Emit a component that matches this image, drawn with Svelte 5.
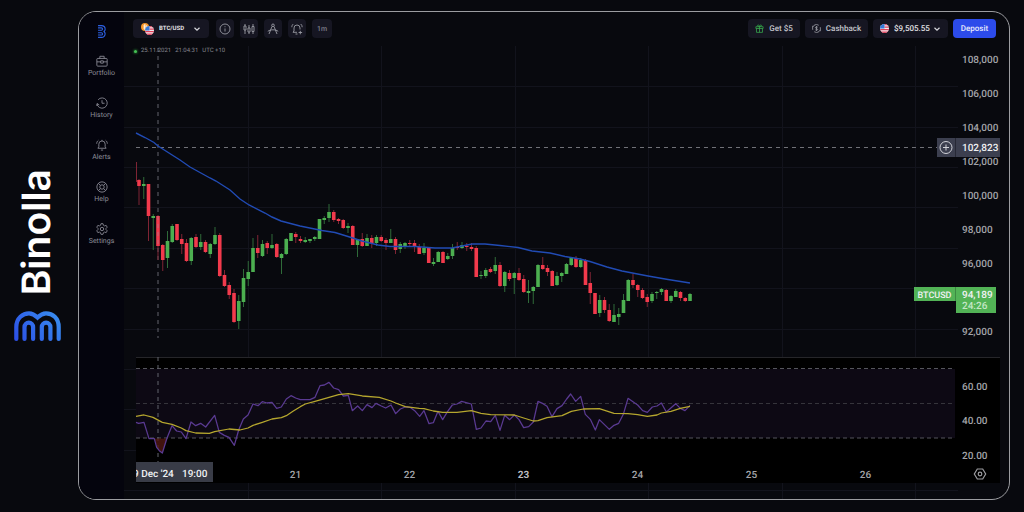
<script lang="ts">
	type Candle = [dir: string, high: number, top: number, bottom: number, low: number];

	const nav = ['Portfolio', 'History', 'Alerts', 'Help', 'Settings'];
	const tools = ['Information', 'Chart type', 'Drawing tools', 'Add alert'];

	const candles: Candle[] = [
		['r', 179, 180, 186, 205], ['g', 177, 184, 186, 199], ['r', 184, 184, 216, 241],
		['g', 214, 216, 218, 250], ['r', 215, 216, 246, 260], ['r', 244, 245, 260, 271],
		['g', 231, 241, 258, 268], ['g', 224, 226, 242, 243], ['r', 224, 224, 240, 241],
		['r', 234, 239, 244, 254], ['r', 239, 243, 261, 262], ['g', 237, 238, 261, 265],
		['r', 234, 237, 247, 248], ['g', 234, 242, 247, 250], ['r', 240, 242, 252, 253],
		['g', 243, 244, 254, 258], ['g', 227, 235, 244, 245], ['r', 233, 235, 276, 277],
		['r', 270, 275, 286, 287], ['r', 282, 285, 295, 299], ['r', 289, 293, 322, 323],
		['g', 295, 301, 321, 329], ['g', 269, 278, 302, 307], ['g', 261, 272, 279, 286],
		['g', 238, 248, 272, 272], ['r', 235, 248, 253, 258], ['g', 240, 244, 256, 257],
		['r', 241, 243, 248, 254], ['g', 234, 245, 248, 249], ['r', 243, 244, 257, 258],
		['g', 253, 254, 258, 274], ['g', 238, 239, 254, 255], ['g', 233, 233, 241, 241],
		['r', 232, 234, 237, 243], ['r', 236, 239, 241, 243], ['g', 237, 240, 242, 243],
		['g', 239, 239, 241, 243], ['g', 236, 237, 239, 241], ['g', 219, 219, 239, 239],
		['g', 216, 218, 220, 224], ['g', 204, 212, 218, 222], ['r', 210, 212, 220, 222],
		['r', 218, 219, 221, 224], ['r', 219, 220, 228, 229], ['g', 223, 226, 228, 233],
		['r', 225, 226, 245, 245], ['g', 239, 239, 245, 257], ['r', 233, 239, 246, 247],
		['g', 234, 238, 246, 246], ['r', 235, 238, 243, 248], ['g', 235, 237, 243, 246],
		['r', 235, 237, 241, 242], ['r', 238, 240, 243, 250], ['g', 229, 239, 243, 243],
		['r', 237, 239, 250, 254], ['g', 242, 244, 249, 253], ['g', 242, 243, 246, 249],
		['r', 240, 243, 244, 247], ['r', 240, 243, 247, 252], ['r', 244, 247, 254, 254],
		['g', 243, 248, 253, 255], ['r', 247, 248, 263, 263], ['g', 258, 262, 264, 266],
		['g', 251, 252, 262, 262], ['r', 251, 252, 263, 263], ['g', 253, 256, 259, 260],
		['g', 244, 248, 256, 259], ['r', 242, 247, 248, 250], ['g', 242, 245, 248, 249],
		['r', 243, 246, 247, 251], ['r', 243, 247, 249, 251], ['r', 246, 248, 277, 277],
		['g', 271, 275, 276, 279], ['g', 268, 270, 276, 278], ['r', 267, 269, 272, 273],
		['g', 257, 265, 271, 274], ['r', 262, 265, 286, 287], ['g', 271, 272, 286, 292],
		['r', 270, 273, 279, 281], ['g', 272, 273, 278, 294], ['r', 268, 273, 280, 281],
		['r', 275, 279, 292, 293], ['g', 280, 291, 293, 303], ['g', 286, 287, 291, 304],
		['g', 264, 265, 287, 287], ['r', 257, 265, 269, 270], ['r', 265, 268, 272, 276],
		['r', 270, 271, 286, 286], ['g', 272, 276, 285, 286], ['g', 272, 273, 276, 282],
		['g', 263, 264, 274, 274], ['g', 257, 258, 265, 266], ['r', 256, 258, 267, 268],
		['g', 258, 260, 267, 268], ['r', 259, 260, 285, 285], ['r', 272, 283, 293, 304],
		['r', 293, 293, 314, 314], ['g', 295, 300, 313, 317], ['r', 297, 300, 310, 313],
		['r', 304, 310, 321, 322], ['g', 304, 315, 322, 322], ['g', 308, 314, 317, 325],
		['g', 294, 300, 313, 313], ['g', 279, 280, 301, 301], ['r', 274, 280, 285, 288],
		['r', 284, 285, 290, 297], ['r', 288, 290, 298, 299], ['r', 294, 297, 302, 307],
		['g', 292, 294, 301, 303], ['g', 291, 292, 293, 299], ['g', 288, 289, 292, 295],
		['r', 289, 290, 301, 301], ['g', 295, 296, 301, 303], ['g', 289, 291, 297, 297],
		['r', 291, 292, 298, 301], ['r', 297, 298, 301, 302], ['g', 293, 294, 301, 301]
	];

	const average =
		'136,133 145,137.5 154,142.5 158,146 180,160 190,167 210,178 216,181 230,190 240,199 249,205 265,213 272,217 281,221 300,226 322,230.5 335,232.5 348,236.5 362,241 378,245 390,246.5 415,246.5 435,248 452,248 462,246 472,244 485,244 500,245.5 518,247.5 532,251 550,253 565,256.5 580,259 590,261.5 607,267 622,271 648,276 668,279.5 690,283';

	// oscillator lines use their own grid, three units to one chart unit
	const rsi =
		'48,217 56,220 72,217 87,266 103,266 110,292 118,302 127,309 141,264 156,227 170,243 184,246 198,266 213,216 227,227 242,220 257,231 284,196 298,247 313,256 327,262 343,286 356,240 370,207 384,195 399,162 414,167 427,155 441,159 456,157 470,175 484,171 499,147 513,137 527,144 541,149 570,149 585,142 600,107 613,105 627,97 641,114 656,119 670,138 685,136 697,182 713,168 727,182 741,164 756,173 768,160 784,168 797,174 813,165 827,191 841,177 856,171 870,172 884,182 899,199 912,182 927,221 940,218 954,184 968,209 983,184 997,165 1011,162 1025,154 1054,162 1069,238 1083,234 1098,213 1112,215 1126,196 1140,241 1154,196 1169,209 1183,195 1197,209 1211,233 1226,230 1240,216 1254,154 1269,161 1281,169 1296,200 1311,176 1326,167 1340,147 1352,132 1367,154 1382,139 1396,193 1411,208 1426,240 1438,209 1468,238 1482,226 1496,220 1510,193 1524,145 1553,165 1568,182 1582,187 1597,171 1611,168 1624,159 1639,186 1667,161 1681,175 1695,182 1710,166';
	const signal =
		'48,199 72,195 99,202 127,217 156,223 184,234 198,242 227,249 268,250 284,245 327,237 360,240 384,234 399,226 427,217 456,207 484,203 499,197 520,183 541,170 556,162 585,154 627,142 656,134 685,131 727,138 778,142 813,153 827,159 856,170 898,175 912,176 940,183 968,187 1011,187 1054,182 1083,190 1112,194 1183,195 1211,204 1240,213 1254,212 1281,203 1326,197 1354,184 1390,177 1438,176 1482,190 1524,191 1553,194 1582,199 1611,195 1624,189 1653,184 1681,175 1710,169';

	const gridX = [248, 381, 515, 648, 782, 915];
	const gridY = [86, 127, 167, 207, 248, 288, 329, 369, 409, 450, 490];
	const prices = [
		['108,000', 59], ['106,000', 93], ['104,000', 127], ['102,000', 161], ['100,000', 195],
		['98,000', 229], ['96,000', 263], ['92,000', 331]
	];
	const levels = [['60.00', 386], ['40.00', 420], ['20.00', 455]];
	const days = [21, 22, 23, 24, 25, 26];
</script>

{#snippet mark()}
	<path d="M2.3 28V16C2.3 7 9 2.3 15 2.3c4 0 6.5 2.2 8.5 4.2 2-2 4.500-4.200 8.500-4.200C38.500 2.300 44.700 7 44.700 16V28" />
	<path d="M10.500 28V16a4.300 4.300 0 0 1 8.600 0V28M27.800 28V16a4.300 4.300 0 0 1 8.600 0V28" />
{/snippet}

{#snippet flag()}
	<svg class="flag" viewBox="0 0 18 18" aria-hidden="true">
		<clipPath id="round"><circle cx="9" cy="9" r="9" /></clipPath>
		<g clip-path="url(#round)">
			<path fill="#f3e9ee" d="M0 0h18v18H0z" />
			<path fill="#e0405a" d="M9 0h9v2.500H9zM9 5h9v2.500H9zM0 10h18v2.500H0zM0 15h18v3H0z" />
			<path fill="#3579d8" d="M0 0h9v9H0z" />
		</g>
	</svg>
{/snippet}

{#snippet chevron()}
	<svg class="chevron" viewBox="0 0 8 8" aria-hidden="true"><path d="M1.500 2.800 4 5.200l2.500-2.400" /></svg>
{/snippet}

<div class="page">
	<div class="brand">
		<span class="brand-name">Binolla</span>
		<svg class="brand-mark" viewBox="0 0 47 31" aria-hidden="true">
			<defs>
				<linearGradient id="blue" x1="0" y1="31" x2="40" y2="0" gradientUnits="userSpaceOnUse">
					<stop offset="0" stop-color="#2b4ce6" />
					<stop offset="1" stop-color="#388bee" />
				</linearGradient>
			</defs>
			<g fill="none" stroke="url(#blue)" stroke-width="4.200" stroke-linecap="round">{@render mark()}</g>
		</svg>
	</div>

	<div class="frame">
		<nav>
			<a class="home" href="#home" aria-label="Home">
				<svg viewBox="0 0 31 47" aria-hidden="true">
					<g transform="translate(31 0) rotate(90)" fill="none" stroke="#2c5fe0" stroke-width="4">{@render mark()}</g>
				</svg>
			</a>
			{#each nav as item}
				<a class="nav-item" href={'#' + item.toLowerCase()}>
					<svg viewBox="0 0 14 14" aria-hidden="true">
						{#if item === 'Portfolio'}
							<rect x="1" y="4" width="12" height="9" rx="1" />
							<path d="M4.500 4V1.500h5V4M1 8h4.500M8.500 8H13M5.500 6.800h3v2.700h-3z" />
						{:else if item === 'History'}
							<path d="M1.200 8.200A6 6 0 1 0 2.500 3.200M1 10.500l.3-3 2.500 1.800M7 3.700v3.600h3" />
						{:else if item === 'Alerts'}
							<path d="M2.200 10.800h9.600L10.700 9V6a3.700 3.700 0 0 0-7.400 0v3zM5.700 12.900h2.600M7 2.300V1M.8 5.500c0-1.700.8-3 2-4M13.200 5.500c0-1.700-.8-3-2-4" />
						{:else if item === 'Help'}
							<circle cx="7" cy="7" r="6" />
							<circle cx="7" cy="7" r="2.600" />
							<path d="M2.800 2.800l2.300 2.300M11.200 2.800 8.900 5.100M2.800 11.200l2.300-2.300M11.200 11.200 8.900 8.900" />
						{:else}
							<path d="M5.800.8h2.400l.5 1.900 1.300.7 1.900-.6 1.200 2.100L11.700 6.300v1.400l1.400 1.400-1.200 2.100-1.900-.6-1.300.7-.5 1.900H5.800l-.5-1.900-1.300-.7-1.900.6L.9 9.100l1.400-1.400V6.300L.9 4.900l1.200-2.100 1.900.6 1.300-.7z" />
							<circle cx="7" cy="7" r="2" />
						{/if}
					</svg>
					{item}
				</a>
			{/each}
		</nav>

		<main>
			<header>
				<label class="pill pair">
					<svg class="coin" viewBox="0 0 12 12" aria-hidden="true">
						<circle cx="6" cy="6" r="6" fill="#f5952a" />
						<path d="M4.500 3h2.300a1.400 1.400 0 0 1 0 3H4.500zM4.500 6h2.700a1.500 1.500 0 0 1 0 3H4.500zM5.500 2v8" fill="none" stroke="#fff" />
					</svg>
					{@render flag()}
					<select aria-label="Asset"><option>BTC/USD</option></select>
					{@render chevron()}
				</label>

				<div class="tools">
					{#each tools as tool, i}
						<button type="button" class="pill tool" aria-label={tool}>
							<svg viewBox="0 0 12 12" aria-hidden="true">
								{#if i === 0}
									<circle cx="6" cy="6" r="5" />
									<path d="M6 5.500v3M6 3.300v.9" />
								{:else if i === 1}
									<path d="M1 3h2v4H1zM2 1v2M2 7v4M5 5h2v4H5zM6 2v3M6 9v2M9 3.500h2v5H9zM10 1v2.500M10 8.500V11" />
								{:else if i === 2}
									<path d="M5 3.500 2 11M7 3.500 10 11M.8 8.300c2.800-2 7.600-2 10.400 0" />
									<circle cx="6" cy="2.300" r="1.300" />
								{:else}
									<path d="M6 9.300H2L3 8V5a3 3 0 0 1 6 0v1.500M4.500 11h2M9.300 7.800v3.500M7.600 9.500h3.500M.8 4.200c0-1.500.6-2.400 1.500-3.200M11.200 4.200c0-1.500-.6-2.400-1.500-3.200" />
								{/if}
							</svg>
						</button>
					{/each}
					<button type="button" class="pill tool period">1m</button>
				</div>

				<div class="account">
					<button type="button" class="pill gift">
						<svg viewBox="0 0 10 10" aria-hidden="true">
							<path d="M1 3h8v2H1zM1.700 5v4.300h6.600V5M5 3v6.300M5 3C3.500 3 2.500 2.500 2.800 1.500S4.700 1 5 3c.3-2 1.900-2.500 2.200-1.500S6.500 3 5 3" />
						</svg>
						Get $5
					</button>
					<button type="button" class="pill cashback">
						<svg viewBox="0 0 10 10" aria-hidden="true">
							<path d="M.8 6.500A4.400 4.400 0 0 1 7.500 1.400M9.200 3.500A4.400 4.400 0 0 1 2.500 8.600M.8 2v1.800M9.200 8V6.200M6.400 3.600C5.800 3 3.800 3 3.800 4.100S6.300 5 6.300 6.100 4.200 7 3.600 6.400M5 2.300v5.400" />
						</svg>
						Cashback
					</button>
					<label class="pill balance">
						{@render flag()}
						<select aria-label="Balance"><option>$9,505.55</option></select>
						{@render chevron()}
					</label>
					<button type="button" class="pill deposit">Deposit</button>
				</div>
			</header>

			<div class="chart">
				<p class="clock"><i></i><span>25.11.2021</span><span>21:04:31</span><span>UTC +10</span></p>

				<svg viewBox="124 38 885 461" role="img" aria-label="BTC/USD price chart with oscillator">
					<g class="grid">
						{#each gridX as x}<path d="M{x + 0.5} 46V499" />{/each}
						{#each gridY as y}<path d="M124 {y + 0.5}H958" />{/each}
					</g>

					<path class="cross" d="M158 48V338" />
					<path class="cross level" d="M136 147.500H937" />
					<path class="wick r" d="M136.500 162V182" />
					{#each candles as [dir, high, top, bottom, low], i}
						{@const x = 139 + i * 4.75}
						<path class="wick {dir}" d="M{x} {high}V{low}" />
						<rect class="body {dir}" x={x - 1.8} y={top} width="3.6" height={bottom - top} />
					{/each}
					<path class="cross over" d="M158 216V246" />
					<polyline class="average" points={average} />

					<g class="axis">
						{#each prices as [label, y]}<text x="962" y={+y + 4}>{label}</text>{/each}
					</g>

					<path fill="#3c3f4f" d="M937 138h63v19h-63z" />
					<path stroke="#272936" d="M955.500 138v19" />
					<g fill="none" stroke="#d2d3d9">
						<circle cx="946" cy="147.500" r="6" />
						<path d="M943 147.500h6M946 144.500v6" />
					</g>
					<text class="tag" x="962" y="151">102,823</text>

					<path fill="#52b356" d="M914 287h41v14h-41zM956 287h40v26h-40z" />
					<path fill="#3c8a42" d="M955 287h1v14h-1z" />
					<text class="tag symbol" x="934.500" y="298">BTCUSD</text>
					<text class="tag" x="962" y="298">94,189</text>
					<text class="countdown" x="962" y="309">24:26</text>

					<path fill="#000" d="M136 357h864v126H136z" />
					<path stroke="#26262a" d="M136 357.500h864" />
					<path fill="#0d0914" d="M136 369h819v69H136z" />
					<g class="bands">
						<path d="M136 368.500H955M136 438H955" />
						<path class="middle" d="M136 403.500H955" />
					</g>
					<path class="cross" d="M158 357V462" />
					<path fill="#511812" d="M154.500 438.500 157 447l3 4 2.500 2 4.500-14.500z" opacity=".8" />
					<g class="lines" transform="translate(120 350) scale(0.33333)">
						<polyline class="rsi" points={rsi} />
						<polyline class="signal" points={signal} />
					</g>
					<g class="axis">
						{#each levels as [label, y]}<text x="962" y={+y + 4}>{label}</text>{/each}
						{#each days as day, i}
							<text class="day" class:strong={day === 23} x={295.5 + i * 114} y="478">{day}</text>
						{/each}
					</g>

					<svg x="136" y="462" width="77" height="20">
						<path fill="#393c47" d="M0 0h77v20H0z" />
						<text class="tag" x="-3" y="15">9 Dec '24</text>
						<text class="tag" x="46" y="15">19:00</text>
					</svg>
					<g fill="none" stroke="#9c9ca0" stroke-width="1.200">
						<path d="M977.300 469h5.400l3 5-3 5h-5.400l-3-5z" />
						<circle cx="980" cy="474" r="1.800" />
					</g>
				</svg>
			</div>
		</main>
	</div>
</div>

<style>
	:global(body) {
		background: #08090e;
	}

	.page {
		display: grid;
		grid-template-columns: 78px 1fr;
		box-sizing: border-box;
		min-height: 100vh;
		padding: 11px 14px 12px 0;
		font-family: Roboto, 'Liberation Sans', sans-serif;
		color: #b9bac2;
		text-rendering: geometricPrecision;
	}

	.brand {
		display: flex;
		flex-direction: column;
		align-items: center;
		justify-content: center;
		gap: 15px;
		padding-right: 4px;
	}

	.brand-name {
		writing-mode: vertical-rl;
		transform: rotate(180deg);
		font: 600 39px/48px Inter, sans-serif;
		color: #fff;
	}

	.brand-mark {
		width: 47px;
	}

	.frame {
		display: grid;
		grid-template-columns: 45px 1fr;
		align-self: start;
		border: 1px solid #9b9ca0;
		border-radius: 18px;
		overflow: hidden;
	}

	nav {
		display: flex;
		flex-direction: column;
		align-items: center;
		padding-top: 13px;
		background: #04040d;
	}

	a {
		color: #8d8e98;
		text-decoration: none;
	}

	.home {
		height: 30px;
	}

	.home svg {
		display: block;
		width: 9px;
		height: 13px;
	}

	.nav-item {
		display: flex;
		flex-direction: column;
		align-items: center;
		gap: 2px;
		height: 42px;
		font-size: 7px;
		line-height: 8px;
	}

	.nav-item svg {
		width: 12px;
		height: 12px;
		fill: none;
		stroke: currentColor;
	}

	main {
		min-width: 0;
	}

	header {
		display: flex;
		height: 19px;
		padding: 7px 13px 0 9px;
	}

	.pill {
		display: flex;
		align-items: center;
		justify-content: center;
		box-sizing: border-box;
		height: 19px;
		padding: 0;
		border: 0;
		border-radius: 4px;
		background: #161622;
		color: #c3c4cb;
		font: 500 8px/10px Roboto, sans-serif;
	}

	button {
		cursor: pointer;
	}

	select {
		appearance: none;
		padding: 0;
		border: 0;
		background: none;
		color: inherit;
		font: inherit;
		text-rendering: inherit;
	}

	button {
		text-rendering: inherit;
	}

	.pair {
		width: 76px;
		color: #e2e2e6;
		font-size: 6px;
		font-weight: 700;
	}

	.pair select {
		margin: 0 8px 0 5px;
	}

	.coin {
		width: 8px;
		height: 8px;
		margin: 0 -4px 4px 0;
	}

	.flag {
		width: 9px;
		height: 9px;
	}

	.pair .flag {
		margin-top: 4px;
	}

	.chevron {
		width: 8px;
		height: 8px;
		fill: none;
		stroke: #d5d6db;
		stroke-width: 1.2;
	}

	.tools {
		display: flex;
		gap: 6px;
		margin-left: 7px;
	}

	.tool {
		width: 18px;
	}

	.tool svg {
		width: 12px;
		height: 12px;
		fill: none;
		stroke: #9b9ca5;
		stroke-width: 0.9;
	}

	.period {
		width: 20px;
		color: #7f808a;
		font-size: 7px;
	}

	.account {
		display: flex;
		gap: 5px;
		margin-left: auto;
	}

	.gift svg,
	.cashback svg {
		width: 9px;
		height: 9px;
		margin-right: 5px;
		fill: none;
		stroke: #9b9ca5;
		stroke-width: 0.9;
	}

	.gift {
		width: 52px;
	}

	.gift svg {
		stroke: #37a34c;
	}

	.cashback {
		width: 63px;
	}

	.balance {
		width: 75px;
		color: #e2e2e6;
	}

	.balance select {
		margin: 0 3px 0 5px;
	}

	.deposit {
		width: 43px;
		background: #2c4bea;
		color: #e6e9fb;
	}

	.chart {
		position: relative;
	}

	.chart > svg {
		display: block;
		width: 100%;
	}

	.clock {
		position: absolute;
		top: 9px;
		left: 10px;
		display: flex;
		align-items: center;
		gap: 4px;
		margin: 0;
		color: #84858d;
		font-size: 6px;
		line-height: 8px;
	}

	.clock i {
		width: 3px;
		height: 3px;
		border-radius: 50%;
		background: #46c155;
		box-shadow: 0 0 2px 1px #174a20;
	}

	.grid {
		stroke: #12131c;
	}

	.cross {
		fill: none;
		stroke: #62646c;
		stroke-dasharray: 4 4;
	}

	.level {
		stroke: #707177;
	}

	.over {
		stroke: #c06a78;
	}

	.wick.r {
		stroke: #7f2434;
	}

	.wick.g {
		stroke: #2f6b39;
	}

	.body.r {
		fill: #f23a4c;
	}

	.body.g {
		fill: #4caf50;
	}

	.average {
		fill: none;
		stroke: #214bb4;
		stroke-width: 1.4;
	}

	text {
		fill: #a3a4a9;
		font-size: 10px;
		font-weight: 500;
		white-space: pre;
	}

	.day,
	.symbol {
		text-anchor: middle;
	}

	.strong {
		fill: #b9babf;
		font-weight: 700;
	}

	.tag {
		fill: #f0f1f3;
	}

	.symbol {
		font-size: 9px;
	}

	.countdown {
		fill: #c3e6c5;
	}

	.bands {
		stroke: #55555c;
		stroke-dasharray: 4 3;
	}

	.middle {
		stroke: #35343b;
	}

	.lines {
		fill: none;
		stroke-width: 3.8;
		stroke-linejoin: round;
	}

	.rsi {
		stroke: #5a3a92;
	}

	.signal {
		stroke: #b5a62e;
	}
</style>
